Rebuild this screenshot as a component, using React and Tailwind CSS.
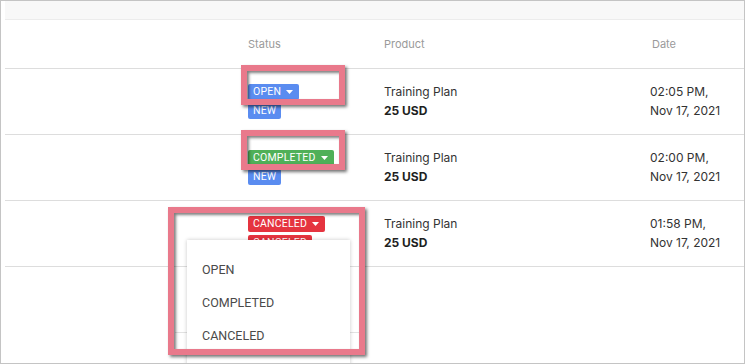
import React from "react";

function Caret() {
  return (
    <svg width="7" height="4" viewBox="0 0 7 4" className="shrink-0">
      <path d="M0 0 L7 0 L3.5 4 Z" fill="#ffffff" />
    </svg>
  );
}

function SelectBadge({ label, color }) {
  return (
    <div
      className={`flex h-[16px] w-fit items-center gap-[5px] rounded-[2px] pl-[5px] pr-[6px] text-[10.5px] leading-none tracking-[0.2px] text-white font-['Roboto',sans-serif] ${color}`}
    >
      <span>{label}</span>
      <Caret />
    </div>
  );
}

function Badge({ label, color }) {
  return (
    <div
      className={`flex h-[16px] w-fit items-center rounded-[2px] px-[5px] text-[10.5px] leading-none tracking-[0.2px] text-white font-['Roboto',sans-serif] ${color}`}
    >
      {label}
    </div>
  );
}

function Row({ status, statusColor, time }) {
  return (
    <div className="flex h-[66px] border-b border-[#dddddd]">
      <div className="w-[243px]" />
      <div className="flex w-[136px] flex-col gap-[3px] pt-[15px]">
        <SelectBadge label={status} color={statusColor} />
        {status === "CANCELED" ? (
          <Badge label="CANCELED" color="bg-[#e5343f]" />
        ) : (
          <Badge label="NEW" color="bg-[#5a8cf0]" />
        )}
      </div>
      <div className="w-[266px] pt-[13px] text-[12px] leading-[19px] text-[#333333]">
        <div>Training Plan</div>
        <div className="font-bold text-[#1f1f1f]">25 USD</div>
      </div>
      <div className="pt-[13px] text-[12px] leading-[19px] text-[#333333]">
        <div>{time},</div>
        <div>Nov 17, 2021</div>
      </div>
    </div>
  );
}

const pinkBox =
  "absolute border-[6px] border-[#e9798b] shadow-[2px_2px_3px_rgba(0,0,0,0.55),inset_2px_2px_3px_rgba(0,0,0,0.5)] z-30";

export default function App() {
  return (
    <div className="relative h-[364px] w-[745px] overflow-hidden border border-[#c4c4c4] bg-white font-['Inter',sans-serif]">
      <div className="ml-[4px] h-[19px] border-b border-[#ececec] bg-[#f8f8f8]" />
      <div className="ml-[4px]">
        <div className="flex h-[49px] items-center border-b border-[#dddddd] text-[11px] text-[#9a9a9a]">
          <div className="w-[243px]" />
          <div className="w-[136px]">Status</div>
          <div className="w-[268px]">Product</div>
          <div>Date</div>
        </div>
        <Row status="OPEN" statusColor="bg-[#5a8cf0]" time="02:05 PM" />
        <Row status="COMPLETED" statusColor="bg-[#4fb058]" time="02:00 PM" />
        <Row status="CANCELED" statusColor="bg-[#e5343f]" time="01:58 PM" />
      </div>

      {/* faint line behind the dropdown */}
      <div className="absolute left-[174px] top-[331px] z-10 h-px w-[184px] bg-[#e2e2e2]" />

      {/* dropdown menu */}
      <div className="absolute left-[186px] top-[239px] z-20 h-[140px] w-[163px] bg-white pt-[14px] shadow-[0_0_4px_rgba(0,0,0,0.22)] font-['Roboto',sans-serif] text-[12.5px] text-[#4a4a4a]">
        <div className="flex h-[33px] items-center pl-[15px]">OPEN</div>
        <div className="flex h-[33px] items-center pl-[15px]">COMPLETED</div>
        <div className="flex h-[33px] items-center pl-[15px]">CANCELED</div>
      </div>

      {/* annotation boxes */}
      <div className={`${pinkBox} left-[240px] top-[64px] h-[40px] w-[104px]`} />
      <div className={`${pinkBox} left-[240px] top-[129px] h-[40px] w-[104px]`} />
      <div className={`${pinkBox} left-[167px] top-[206px] h-[148px] w-[197px]`} />
    </div>
  );
}
